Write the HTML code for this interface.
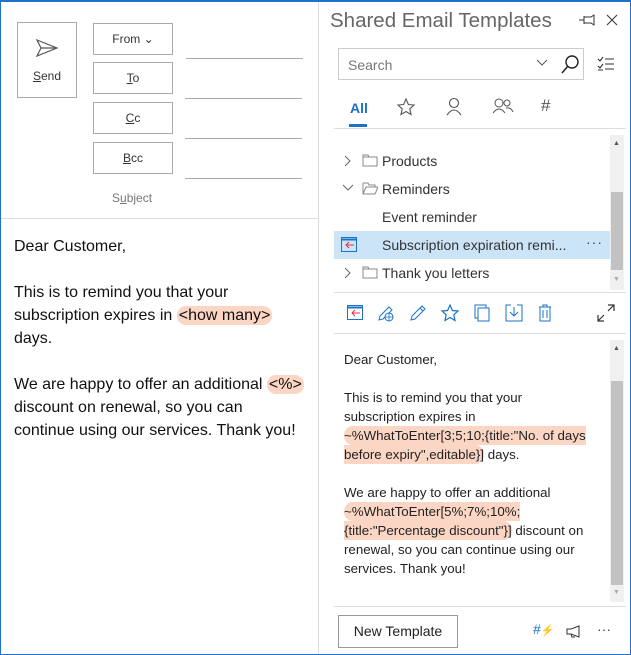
<!DOCTYPE html>
<html><head><meta charset="utf-8"><style>
*{margin:0;padding:0;box-sizing:border-box}
body{width:631px;height:655px;overflow:hidden;background:#fff;font-family:"Liberation Sans",sans-serif;position:relative;color:#222}
.abs{position:absolute}
.frame{left:0;top:0;width:631px;height:655px;border:1px solid #1a73c8;border-top:2px solid #1a73c8}
.btn{position:absolute;border:1px solid #aaa;background:#fff;font-size:12px;color:#333;text-align:center}
.line{position:absolute;height:1px;background:#aaa}
.body{left:14px;font-size:16px;color:#111;line-height:23px}
.hl{background:#fcd6c4;border-radius:9px;padding:1px 2px}
.tr{position:absolute;left:382px;font-size:14px;color:#333}
.pv{left:344px;top:350px;width:262px;font-size:13.3px;line-height:19px;color:#222}
.pv .h{background:#fcd6c4;border-radius:9px;padding:2px 0}
svg{position:absolute}
</style></head><body>
<div class="btn" style="left:17px;top:22px;width:60px;height:76px;padding-top:46px"><u>S</u>end</div>
<svg style="left:35px;top:38px" width="24" height="20" viewBox="0 0 24 20"><path d="M2 2 L22 10 L2 18 L6 10 Z M6 10 H22" fill="none" stroke="#555" stroke-width="1.2"/></svg>
<div class="btn" style="left:93px;top:23px;width:80px;height:32px;line-height:30px">From &#8964;</div>
<div class="btn" style="left:93px;top:62px;width:80px;height:32px;line-height:30px"><u>T</u>o</div>
<div class="btn" style="left:93px;top:102px;width:80px;height:32px;line-height:30px"><u>C</u>c</div>
<div class="btn" style="left:93px;top:142px;width:80px;height:32px;line-height:30px"><u>B</u>cc</div>
<div class="abs" style="left:112px;top:191px;font-size:12px;color:#777">S<u>u</u>bject</div>
<div class="line" style="left:186px;top:58px;width:117px"></div>
<div class="line" style="left:185px;top:98px;width:117px"></div>
<div class="line" style="left:185px;top:138px;width:117px"></div>
<div class="line" style="left:185px;top:178px;width:117px"></div>
<div class="abs" style="left:1px;top:218px;width:317px;height:1px;background:#ddd"></div>
<div class="abs" style="left:318px;top:2px;width:1px;height:652px;background:#ddd"></div>
<div class="abs body" style="top:235px">Dear Customer,<br><br>This is to remind you that your<br>subscription expires in <span class="hl">&lt;how many&gt;</span><br>days.<br><br>We are happy to offer an additional <span class="hl">&lt;%&gt;</span><br>discount on renewal, so you can<br>continue using our services. Thank you!</div>
<div class="abs" style="left:330px;top:9px;font-size:20.5px;color:#666">Shared Email Templates</div>
<svg style="left:578px;top:14px" width="18" height="12"><path d="M1 6 H6 M6 2 V10 M6 3 H13 L16 1 V11 L13 9 H6" fill="none" stroke="#333"/></svg>
<svg style="left:606px;top:14px" width="12" height="12"><path d="M1 1 L11 11 M11 1 L1 11" stroke="#444" stroke-width="1.2"/></svg>
<div class="abs" style="left:338px;top:48px;width:246px;height:32px;border:1px solid #ccc"></div>
<div class="abs" style="left:348px;top:57px;font-size:14px;color:#777">Search</div>
<svg style="left:536px;top:59px" width="12" height="8"><path d="M1 1 L6 6 L11 1" fill="none" stroke="#555"/></svg>
<svg style="left:560px;top:53px" width="20" height="22"><circle cx="12" cy="9" r="6" fill="none" stroke="#222" stroke-width="1.4"/><path d="M8 13 L2 20" stroke="#222" stroke-width="1.5"/></svg>
<svg style="left:597px;top:56px" width="18" height="16"><path d="M1 3 L3 5 L6 1 M1 10 L3 12 L6 8 M8 3 H17 M8 8 H17 M8 13 H17 M1 14 H6" fill="none" stroke="#333" stroke-width="1.1"/></svg>
<div class="abs" style="left:350px;top:100px;font-size:14px;color:#1a6fc8;font-weight:bold">All</div>
<div class="abs" style="left:349px;top:124px;width:18px;height:3px;background:#1a73c8"></div>
<div class="abs" style="left:334px;top:128px;width:292px;height:1px;background:#ddd"></div>
<svg style="left:396px;top:97px" width="20" height="20"><path d="M10 2 L12.4 7.5 L18 8 L13.8 11.8 L15 17.5 L10 14.5 L5 17.5 L6.2 11.8 L2 8 L7.6 7.5 Z" fill="none" stroke="#555" stroke-width="1.1"/></svg>
<svg style="left:445px;top:97px" width="18" height="20"><circle cx="9" cy="6" r="4.5" fill="none" stroke="#555" stroke-width="1.1"/><path d="M2 18 Q9 8 16 18" fill="none" stroke="#555" stroke-width="1.1"/></svg>
<svg style="left:492px;top:97px" width="22" height="20"><circle cx="7" cy="6" r="4" fill="none" stroke="#555"/><circle cx="15" cy="6" r="3" fill="none" stroke="#555"/><path d="M1 16 Q7 8 13 16 M14 11 Q19 10 21 15" fill="none" stroke="#555"/></svg>
<div class="abs" style="left:541px;top:96px;font-size:17px;color:#555">#</div>
<div class="abs" style="left:610px;top:135px;width:14px;height:155px;background:#f0f0f0"></div>
<div class="abs" style="left:611px;top:192px;width:12px;height:78px;background:#c2c2c2"></div>
<div class="abs" style="left:613px;top:140px;font-size:7px;color:#555">▲</div>
<div class="abs" style="left:613px;top:276px;font-size:7px;color:#aaa">▼</div>
<div class="abs" style="left:334px;top:231px;width:276px;height:28px;background:#cce4f7"></div>
<svg style="left:344px;top:155px" width="8" height="12"><path d="M1 1 L6 6 L1 11" fill="none" stroke="#666"/></svg>
<svg style="left:344px;top:267px" width="8" height="12"><path d="M1 1 L6 6 L1 11" fill="none" stroke="#666"/></svg>
<svg style="left:342px;top:184px" width="12" height="8"><path d="M1 1 L6 6 L11 1" fill="none" stroke="#666"/></svg>
<svg style="left:362px;top:154px" width="16" height="13"><path d="M1 1 H6 L7 3 H15 V12 H1 Z M1 3 H7" fill="none" stroke="#888"/></svg>
<svg style="left:362px;top:182px" width="16" height="13"><path d="M1 1 H6 L7 3 H13 V5 M1 12 V1 M1 12 L4 5 H16 L13 12 Z" fill="none" stroke="#888"/></svg>
<svg style="left:362px;top:266px" width="16" height="13"><path d="M1 1 H6 L7 3 H15 V12 H1 Z M1 3 H7" fill="none" stroke="#888"/></svg>
<div class="tr" style="top:153px">Products</div>
<div class="tr" style="top:181px">Reminders</div>
<div class="tr" style="top:209px">Event reminder</div>
<div class="tr" style="top:237px">Subscription expiration remi...</div>
<div class="tr" style="top:265px">Thank you letters</div>
<div class="abs" style="left:586px;top:234px;font-size:14px;color:#444;letter-spacing:1px">···</div>
<svg style="left:341px;top:237px" width="16" height="15"><rect x="0.5" y="0.5" width="15" height="14" fill="none" stroke="#1a73c8"/><path d="M0.5 2.5 H15.5" stroke="#1a73c8" stroke-width="2"/><path d="M13 8 H5 M8 5 L5 8 L8 11" fill="none" stroke="#e0304a"/></svg>
<div class="abs" style="left:334px;top:292px;width:292px;height:1px;background:#ddd"></div>
<svg style="left:347px;top:305px" width="16" height="15"><rect x="0.5" y="0.5" width="15" height="14" fill="none" stroke="#1a73c8"/><path d="M0.5 2.5 H15.5" stroke="#1a73c8" stroke-width="2"/><path d="M13 8 H5 M8 5 L5 8 L8 11" fill="none" stroke="#e0304a"/></svg>
<svg style="left:377px;top:304px" width="18" height="18"><path d="M2 16 L3 12 L12 3 L15 6 L6 15 Z" fill="none" stroke="#1a73c8"/><circle cx="12" cy="13" r="4" fill="#fff" stroke="#1a73c8"/><path d="M8 13 H16 M12 9 V17" stroke="#1a73c8" stroke-width=".8"/></svg>
<svg style="left:409px;top:304px" width="18" height="18"><path d="M2 16 L3 12 L13 2 L16 5 L6 15 Z M11 4 L14 7" fill="none" stroke="#1a73c8"/></svg>
<svg style="left:440px;top:303px" width="20" height="19"><path d="M10 2 L12.4 7.5 L18 8 L13.8 11.8 L15 17.5 L10 14.5 L5 17.5 L6.2 11.8 L2 8 L7.6 7.5 Z" fill="none" stroke="#1a73c8" stroke-width="1.2"/></svg>
<svg style="left:474px;top:304px" width="16" height="18"><rect x="1" y="1" width="11" height="13" fill="none" stroke="#1a73c8"/><rect x="4" y="4" width="11" height="13" fill="#fff" stroke="#1a73c8"/></svg>
<svg style="left:505px;top:304px" width="18" height="18"><path d="M6 1 H1 V17 H17 V1 H12 M9 3 V12 M5 8 L9 12 L13 8" fill="none" stroke="#1a73c8"/></svg>
<svg style="left:538px;top:304px" width="14" height="18"><path d="M1 3 H13 M5 3 V1 H9 V3 M2 3 V17 H12 V3 M5 6 V14 M9 6 V14" fill="none" stroke="#1a73c8"/></svg>
<svg style="left:597px;top:304px" width="18" height="18"><path d="M1 17 L7 11 M1 11 V17 H7 M17 1 L11 7 M11 1 H17 V7" fill="none" stroke="#333" stroke-width="1.2"/></svg>
<div class="abs" style="left:334px;top:333px;width:292px;height:1px;background:#ddd"></div>
<div class="abs" style="left:610px;top:340px;width:14px;height:262px;background:#f0f0f0"></div>
<div class="abs" style="left:611px;top:381px;width:12px;height:204px;background:#c2c2c2"></div>
<div class="abs" style="left:613px;top:345px;font-size:7px;color:#555">▲</div>
<div class="abs" style="left:613px;top:589px;font-size:7px;color:#aaa">▼</div>
<div class="abs pv">Dear Customer,<br><br>This is to remind you that your<br>subscription expires in<br><span class="h">~%WhatToEnter[3;5;10;{title:"No. of days before expiry",editable}]</span> days.<br><br>We are happy to offer an additional<br><span class="h">~%WhatToEnter[5%;7%;10%;<br>{title:"Percentage discount"}]</span> discount on renewal, so you can continue using our services. Thank you!</div>
<div class="abs" style="left:334px;top:606px;width:292px;height:1px;background:#ddd"></div>
<div class="btn" style="left:338px;top:615px;width:120px;height:33px;line-height:31px;font-size:14px;color:#222;border-color:#999">New Template</div>
<div class="abs" style="left:533px;top:621px;font-size:14px;color:#1a73c8">#<span style="color:#888;font-size:11px">⚡</span></div>
<svg style="left:566px;top:624px" width="18" height="14"><path d="M1 5 V10 H5 L13 13 V2 L5 5 Z M5 10 L6 13 H9" fill="none" stroke="#333"/></svg>
<div class="abs" style="left:597px;top:621px;font-size:14px;color:#444">···</div>
<div class="abs frame"></div>
</body></html>
